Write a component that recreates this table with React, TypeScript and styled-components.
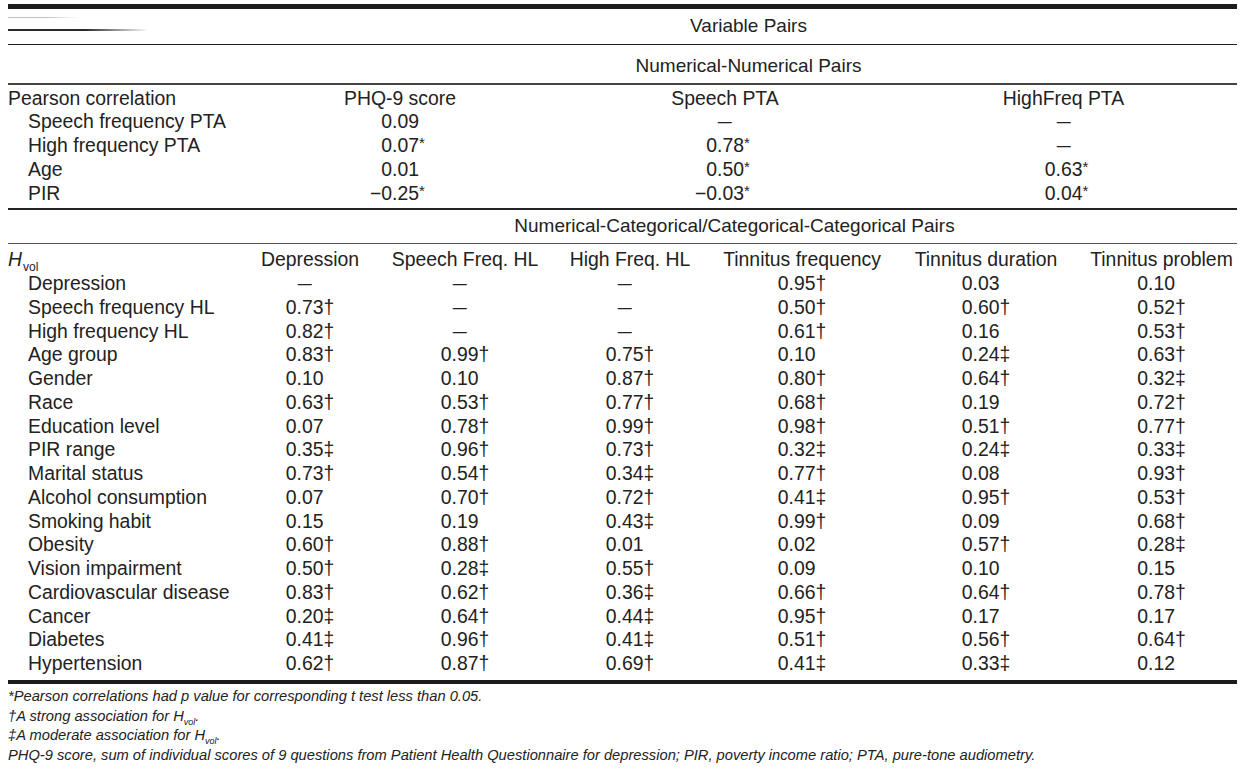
import React from "react";
import styled, { createGlobalStyle } from "styled-components";

const Global = createGlobalStyle`
  html, body { margin: 0; padding: 0; background: #fff; }
  body {
    font-family: "Liberation Sans", Arial, Helvetica, sans-serif;
    color: #222;
  }
`;

const Page = styled.div`
  width: 1255px;
  height: 770px;
  box-sizing: border-box;
  padding: 4px 18px 0 8px;
  overflow: hidden;
`;

const Rule = styled.div<{ $h: number; $c?: string }>`
  height: ${(p) => p.$h}px;
  background: ${(p) => p.$c ?? "#222"};
`;

const TitleRow = styled.div<{ $h: number; $cols: string; $pad?: number }>`
  display: grid;
  grid-template-columns: ${(p) => p.$cols};
  height: ${(p) => p.$h}px;
  align-items: center;
  font-size: 19px;
  padding-top: ${(p) => p.$pad ?? 0}px;
  box-sizing: border-box;
`;

const TitleText = styled.div<{ $shift?: number }>`
  text-align: center;
  padding-left: ${(p) => p.$shift ?? 0}px;
  white-space: nowrap;
`;

const Smudge = styled.div`
  display: flex;
  flex-direction: column;
  align-self: start;
  padding-top: 8px;
  gap: 11px;
`;

const SmudgeLine = styled.div<{ $w: number; $c: string }>`
  width: ${(p) => p.$w}px;
  height: 1.5px;
  background: linear-gradient(to right, ${(p) => p.$c} 0%, ${(p) => p.$c} 55%, rgba(255,255,255,0) 100%);
`;

const Table = styled.div<{ $cols: string; $pt: number; $pb: number }>`
  display: grid;
  grid-template-columns: ${(p) => p.$cols};
  grid-auto-rows: 23.75px;
  padding-top: ${(p) => p.$pt}px;
  padding-bottom: ${(p) => p.$pb}px;
  font-size: 19.4px;
  line-height: 23.75px;
`;

const Label = styled.div<{ $indent?: boolean }>`
  padding-left: ${(p) => (p.$indent ? 20 : 0)}px;
  white-space: nowrap;
`;

const HeadCell = styled.div`
  text-align: center;
  white-space: nowrap;
`;

const ValueCell = styled.div`
  display: flex;
  justify-content: center;
  white-space: nowrap;
`;

const Num = styled.span`
  display: inline-flex;
  justify-content: flex-end;
  width: 38px;
`;

const DashBox = styled.span`
  display: inline-block;
  width: 38px;
  text-align: center;
`;

const Dash = styled.span`
  display: inline-block;
  transform: scaleX(0.72);
`;

const Mark = styled.span<{ $w: number; $small?: boolean }>`
  display: inline-block;
  width: ${(p) => p.$w}px;
  text-align: left;
  overflow: visible;
  font-size: ${(p) => (p.$small ? "15px" : "inherit")};
  margin-top: ${(p) => (p.$small ? "-3px" : "0")};
`;

const HSym = styled.span`
  font-style: italic;
`;

const HSub = styled.sub`
  font-size: 12px;
  vertical-align: -5px;
  line-height: 0;
  margin-left: 1px;
`;

const Notes = styled.div`
  padding-top: 3px;
  font-size: 14.7px;
  font-style: italic;
  line-height: 19.6px;
  color: #222;
`;

const NoteLine = styled.div`
  white-space: nowrap;
`;

const NoteSub = styled.sub`
  font-size: 9px;
  vertical-align: -4px;
  line-height: 0;
`;

type V = string;

const Value: React.FC<{ v: V; hang?: boolean }> = ({ v, hang }) => {
  const markW = hang ? 0 : 11;
  if (v === "—") {
    return (
      <ValueCell>
        <DashBox>
          <Dash>—</Dash>
        </DashBox>
        <Mark $w={markW} />
      </ValueCell>
    );
  }
  const m = v.match(/^(.*?)([*†‡]?)$/);
  const num = m ? m[1] : v;
  const mark = m ? m[2] : "";
  return (
    <ValueCell>
      <Num>{num}</Num>
      <Mark $w={markW} $small={mark === "*"}>
        {mark}
      </Mark>
    </ValueCell>
  );
};

const pearson: [string, V[]][] = [
  ["Speech frequency PTA", ["0.09", "—", "—"]],
  ["High frequency PTA", ["0.07*", "0.78*", "—"]],
  ["Age", ["0.01", "0.50*", "0.63*"]],
  ["PIR", ["−0.25*", "−0.03*", "0.04*"]],
];

const catHeads = [
  "Depression",
  "Speech Freq. HL",
  "High Freq. HL",
  "Tinnitus frequency",
  "Tinnitus duration",
  "Tinnitus problem",
];

const catRows: [string, V[]][] = [
  ["Depression", ["—", "—", "—", "0.95†", "0.03", "0.10"]],
  ["Speech frequency HL", ["0.73†", "—", "—", "0.50†", "0.60†", "0.52†"]],
  ["High frequency HL", ["0.82†", "—", "—", "0.61†", "0.16", "0.53†"]],
  ["Age group", ["0.83†", "0.99†", "0.75†", "0.10", "0.24‡", "0.63†"]],
  ["Gender", ["0.10", "0.10", "0.87†", "0.80†", "0.64†", "0.32‡"]],
  ["Race", ["0.63†", "0.53†", "0.77†", "0.68†", "0.19", "0.72†"]],
  ["Education level", ["0.07", "0.78†", "0.99†", "0.98†", "0.51†", "0.77†"]],
  ["PIR range", ["0.35‡", "0.96†", "0.73†", "0.32‡", "0.24‡", "0.33‡"]],
  ["Marital status", ["0.73†", "0.54†", "0.34‡", "0.77†", "0.08", "0.93†"]],
  ["Alcohol consumption", ["0.07", "0.70†", "0.72†", "0.41‡", "0.95†", "0.53†"]],
  ["Smoking habit", ["0.15", "0.19", "0.43‡", "0.99†", "0.09", "0.68†"]],
  ["Obesity", ["0.60†", "0.88†", "0.01", "0.02", "0.57†", "0.28‡"]],
  ["Vision impairment", ["0.50†", "0.28‡", "0.55†", "0.09", "0.10", "0.15"]],
  ["Cardiovascular disease", ["0.83†", "0.62†", "0.36‡", "0.66†", "0.64†", "0.78†"]],
  ["Cancer", ["0.20‡", "0.64†", "0.44‡", "0.95†", "0.17", "0.17"]],
  ["Diabetes", ["0.41‡", "0.96†", "0.41‡", "0.51†", "0.56†", "0.64†"]],
  ["Hypertension", ["0.62†", "0.87†", "0.69†", "0.41‡", "0.33‡", "0.12"]],
];

const T1_COLS = "232px 320px 330px 1fr";
const T2_COLS = "224px 156px 154px 176px 168px 200px 1fr";

export default function App() {
  return (
    <Page>
      <Global />
      <Rule $h={4.5} $c="#1c1c1c" />
      <TitleRow $h={35} $cols="232px 1fr">
        <Smudge>
          <SmudgeLine $w={70} $c="#c0c0c0" />
          <SmudgeLine $w={140} $c="#2a2a2a" />
        </Smudge>
        <TitleText $shift={20}>Variable Pairs</TitleText>
      </TitleRow>
      <Rule $h={1.5} />
      <TitleRow $h={38} $pad={3} $cols="232px 1fr">
        <div />
        <TitleText $shift={20}>Numerical-Numerical Pairs</TitleText>
      </TitleRow>
      <Rule $h={1.5} $c="#444" />
      <Table $cols={T1_COLS} $pt={2} $pb={3}>
        <Label>Pearson correlation</Label>
        <HeadCell>PHQ-9 score</HeadCell>
        <HeadCell>Speech PTA</HeadCell>
        <HeadCell>HighFreq PTA</HeadCell>
        {pearson.map(([name, vals]) => (
          <React.Fragment key={name}>
            <Label $indent>{name}</Label>
            {vals.map((v, i) => (
              <Value key={i} v={v} hang />
            ))}
          </React.Fragment>
        ))}
      </Table>
      <Rule $h={1.5} />
      <TitleRow $h={33} $cols="224px 1fr">
        <div />
        <TitleText>Numerical-Categorical/Categorical-Categorical Pairs</TitleText>
      </TitleRow>
      <Rule $h={1.5} $c="#555" />
      <Table $cols={T2_COLS} $pt={4} $pb={4}>
        <Label>
          <HSym>H</HSym>
          <HSub>vol</HSub>
        </Label>
        {catHeads.map((h) => (
          <HeadCell key={h}>{h}</HeadCell>
        ))}
        {catRows.map(([name, vals]) => (
          <React.Fragment key={name}>
            <Label $indent>{name}</Label>
            {vals.map((v, i) => (
              <Value key={i} v={v} />
            ))}
          </React.Fragment>
        ))}
      </Table>
      <Rule $h={4.5} $c="#1c1c1c" />
      <Notes>
        <NoteLine>*Pearson correlations had p value for corresponding t test less than 0.05.</NoteLine>
        <NoteLine>
          †A strong association for H<NoteSub>vol</NoteSub>.
        </NoteLine>
        <NoteLine>
          ‡A moderate association for H<NoteSub>vol</NoteSub>.
        </NoteLine>
        <NoteLine>
          PHQ-9 score, sum of individual scores of 9 questions from Patient Health Questionnaire for depression; PIR,
          poverty income ratio; PTA, pure-tone audiometry.
        </NoteLine>
      </Notes>
    </Page>
  );
}
